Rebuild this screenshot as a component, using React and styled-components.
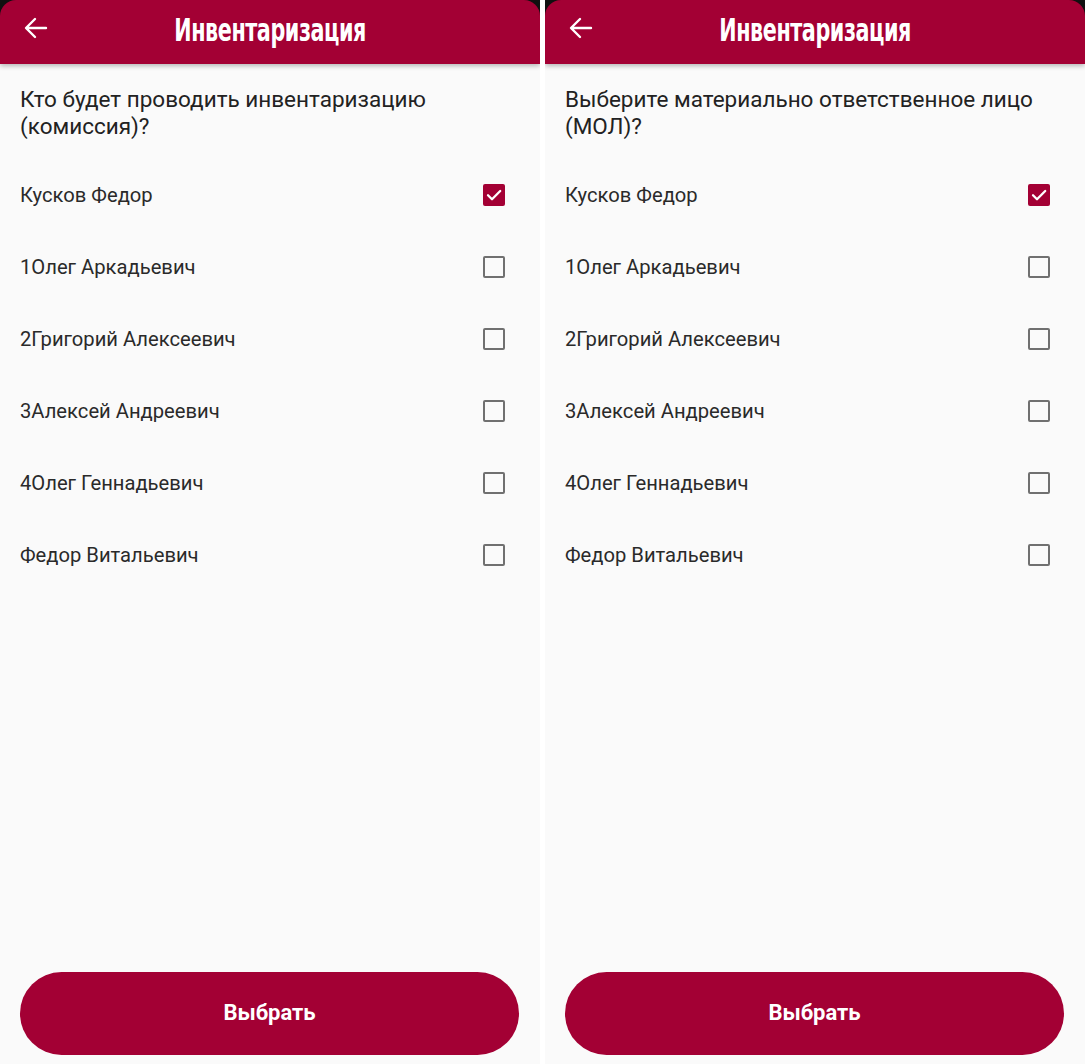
import React from 'react';
import styled, { createGlobalStyle } from 'styled-components';

// ----- GLOBAL

const GlobalStyle = createGlobalStyle`
	html, body {
		margin: 0;
		padding: 0;
		background: #ffffff;
	}
	* {
		box-sizing: border-box;
	}
`;

const crimson = '#a30034';

// ----- STYLED COMPONENTS

const Screens = styled.div`
	display: flex;
	gap: 5px;
	width: 1085px;
	height: 1064px;
	background: #ffffff;
`;
const Phone = styled.div`
	flex: 0 0 540px;
	display: flex;
	flex-direction: column;
	background: #111;
	overflow: hidden;
`;
const Header = styled.header`
	position: relative;
	z-index: 1;
	flex: 0 0 64px;
	display: flex;
	align-items: center;
	justify-content: center;
	background: ${crimson};
	border-radius: 16px 16px 0 0;
	box-shadow: 0 2px 5px rgba(0, 0, 0, 0.28);
`;
const BackButton = styled.button`
	position: absolute;
	left: 23px;
	top: 16px;
	width: 26px;
	height: 24px;
	padding: 0;
	border: 0;
	background: none;
	display: flex;
	align-items: center;
	justify-content: center;
`;
const Title = styled.h1`
	margin: 0 0 4px 0;
	font-family: "Liberation Sans Narrow", "DejaVu Sans Condensed", sans-serif;
	font-weight: 700;
	font-size: 32px;
	letter-spacing: -0.6px;
	color: #ffffff;
	transform: scaleX(0.72);
`;
const Body = styled.main`
	flex: 1;
	display: flex;
	flex-direction: column;
	background: #fafafa;
	padding: 22px 0 9px 0;
`;
const Question = styled.p`
	margin: 0 20px 19px 20px;
	font-family: Roboto, "Liberation Sans", sans-serif;
	font-size: 22.5px;
	line-height: 27px;
	color: #222222;
`;
const List = styled.ul`
	flex: 1;
	list-style: none;
	margin: 0;
	padding: 0;
`;
const Row = styled.li`
	height: 72px;
	display: flex;
	align-items: center;
	justify-content: space-between;
	padding: 0 35px 0 20px;
	font-family: Roboto, "Liberation Sans", sans-serif;
	font-size: 20.2px;
	color: #2a2a2a;
`;
const Box = styled.span`
	width: 22px;
	height: 22px;
	border-radius: 2px;
	display: flex;
	align-items: center;
	justify-content: center;
	${({ checked }) => checked ? `
		background: ${crimson};
	` : `
		border: 2px solid #707070;
	`}
`;
const SubmitButton = styled.button`
	margin: 0 21px 0 20px;
	height: 83px;
	border: 0;
	border-radius: 42px;
	background: ${crimson};
	color: #ffffff;
	font-family: Roboto, "Liberation Sans", sans-serif;
	font-weight: 700;
	font-size: 22px;
	padding-bottom: 3px;
	cursor: pointer;
`;

// ----- CONTENTS

const people = [
	'Кусков Федор',
	'1Олег Аркадьевич',
	'2Григорий Алексеевич',
	'3Алексей Андреевич',
	'4Олег Геннадьевич',
	'Федор Витальевич',
];

const ArrowBack = () => (
	<svg width="24" height="22" viewBox="0 0 24 22" fill="none">
		<path d="M22 11H2.5M11 2L2 11l9 9" stroke="#ffffff" strokeWidth="2.4" strokeLinecap="round" strokeLinejoin="round" />
	</svg>
);

const Tick = () => (
	<svg width="18" height="18" viewBox="0 0 18 18" fill="none">
		<path d="M3 9.3l4 4L15.2 5" stroke="#ffffff" strokeWidth="2.3" strokeLinecap="round" strokeLinejoin="round" />
	</svg>
);

const Screen = ({ question }) => (
	<Phone>
		<Header>
			<BackButton aria-label="Назад"><ArrowBack /></BackButton>
			<Title>Инвентаризация</Title>
		</Header>
		<Body>
			<Question>{question}</Question>
			<List>
				{people.map((name, i) => (
					<Row key={name}>
						{name}
						<Box checked={i === 0}>{i === 0 && <Tick />}</Box>
					</Row>
				))}
			</List>
			<SubmitButton>Выбрать</SubmitButton>
		</Body>
	</Phone>
);

export default function App() {
	return (
		<>
			<GlobalStyle />
			<Screens>
				<Screen question={<>Кто будет проводить инвентаризацию<br />(комиссия)?</>} />
				<Screen question={<>Выберите материально ответственное лицо<br />(МОЛ)?</>} />
			</Screens>
		</>
	);
}
